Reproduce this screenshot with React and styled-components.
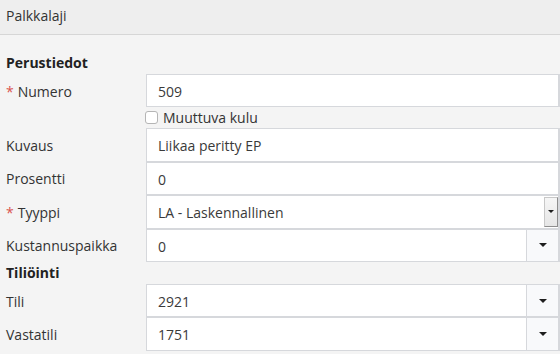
import styled, { createGlobalStyle } from "styled-components"

const Global = createGlobalStyle`
  html, body {
    margin: 0;
    padding: 0;
    background: #f4f4f4;
  }
  body {
    font-family: "Open Sans", "Noto Sans", sans-serif;
    font-size: 14px;
    color: #333;
  }
`

const Page = styled.div`
  width: 560px;
  height: 354px;
  background: #f4f4f4;
  overflow: hidden;
`

const Header = styled.div`
  height: 35px;
  box-sizing: border-box;
  padding: 6px 0 0 6px;
  background: #eeeeee;
  border-bottom: 1px solid #d6d6d6;
  line-height: 19px;
`

const Body = styled.div`
  padding-top: 17px;
`

const SectionTitle = styled.div`
  height: ${p => p.$h || 22}px;
  line-height: ${p => p.$h || 22}px;
  padding-left: 6px;
  font-weight: 700;
  color: #222;
`

const Row = styled.div`
  display: grid;
  grid-template-columns: 146px 1fr;
  align-items: center;
  height: 33.4px;
`

const Label = styled.div`
  padding-left: 6px;
  padding-top: 1px;
  color: #333;
`

const Star = styled.span`
  color: #d9534f;
  margin-right: 4px;
`

const Field = styled.div`
  display: flex;
  height: 33.4px;
  box-sizing: border-box;
  background: #fff;
  border: 1px solid #d6d8dc;
  border-right-width: 2px;
`

const Value = styled.div`
  flex: 1;
  padding-left: 11px;
  padding-top: 1px;
  line-height: 31px;
  color: #3a3a3a;
`

const Addon = styled.div`
  width: 31px;
  display: flex;
  align-items: center;
  justify-content: center;
  background: #f8f9fb;
  border-left: 1px solid #d6d8dc;
`

const Caret = styled.span`
  width: 0;
  height: 0;
  border-left: ${p => p.$s || 4}px solid transparent;
  border-right: ${p => p.$s || 4}px solid transparent;
  border-top: ${p => p.$s || 4}px solid #1e1e1e;
`

const NativeArrow = styled.div`
  width: 12px;
  margin: 1px 0 1px 0;
  display: flex;
  align-items: center;
  justify-content: center;
  background: linear-gradient(#f6f6f6, #e6e6e6);
  border: 1px solid #c8c8c8;
  border-right-color: #8e8e8e;
  border-bottom-color: #8e8e8e;
`

const CheckRow = styled.div`
  display: grid;
  grid-template-columns: 145px 1fr;
  height: 21px;
  align-items: center;
`

const CheckLabel = styled.label`
  display: flex;
  align-items: center;
  gap: 5px;
  grid-column: 2;
  color: #333;
`

const Box = styled.span`
  width: 11px;
  height: 11px;
  border: 1px solid #b5b5b5;
  border-radius: 3px;
  background: #fff;
`

function FormRow({ label, required, value, kind }) {
  return (
    <Row>
      <Label>
        {required && <Star>*</Star>}
        {label}
      </Label>
      <Field>
        <Value>{value}</Value>
        {kind === "dropdown" && (
          <Addon>
            <Caret />
          </Addon>
        )}
        {kind === "native" && (
          <NativeArrow>
            <Caret $s={3} />
          </NativeArrow>
        )}
      </Field>
    </Row>
  )
}

export default function App() {
  return (
    <Page>
      <Global />
      <Header>Palkkalaji</Header>
      <Body>
        <SectionTitle>Perustiedot</SectionTitle>
        <FormRow label="Numero" required value="509" />
        <CheckRow>
          <CheckLabel>
            <Box />
            Muuttuva kulu
          </CheckLabel>
        </CheckRow>
        <FormRow label="Kuvaus" value="Liikaa peritty EP" />
        <FormRow label="Prosentti" value="0" />
        <FormRow label="Tyyppi" required value="LA - Laskennallinen" kind="native" />
        <FormRow label="Kustannuspaikka" value="0" kind="dropdown" />
        <SectionTitle $h={22}>Tiliöinti</SectionTitle>
        <FormRow label="Tili" value="2921" kind="dropdown" />
        <FormRow label="Vastatili" value="1751" kind="dropdown" />
      </Body>
    </Page>
  )
}
